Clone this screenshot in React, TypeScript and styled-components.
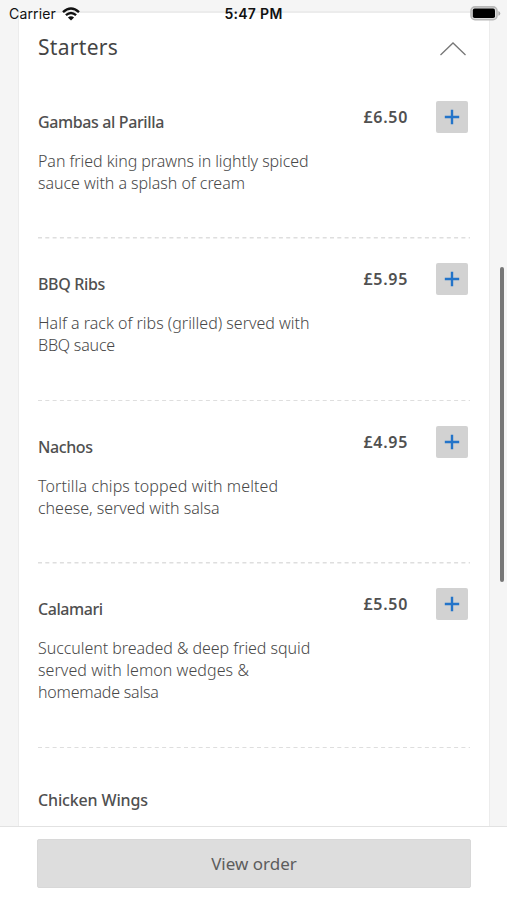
import React from "react";
import styled, { createGlobalStyle } from "styled-components";

const GlobalStyle = createGlobalStyle`
  *, *::before, *::after { box-sizing: border-box; }
  html, body { margin: 0; padding: 0; overflow: hidden; }
  body { font-family: "Noto Sans", "Open Sans", sans-serif; color: #505050; }
  h2, h3, p { margin: 0; }
`;

const Screen = styled.div`
  position: relative;
  display: flex;
  flex-direction: column;
  height: 900px;
  background: #f5f5f5;
  overflow: hidden;
`;

const StatusBar = styled.div`
  position: absolute;
  inset: 0 0 auto 0;
  display: grid;
  grid-template-columns: 1fr auto 1fr;
  align-items: center;
  height: 27px;
  padding: 0 8px 0 9px;
  font-family: Inter, "Liberation Sans", sans-serif;
  font-size: 14px;
  color: #111;
`;

const Carrier = styled.div`
  display: flex;
  align-items: center;
  gap: 6px;
  letter-spacing: 0.15px;
`;

const Clock = styled.div`
  font-weight: 600;
  letter-spacing: 0.3px;
  padding-right: 1px;
`;

const BatterySlot = styled.div`
  display: flex;
  justify-content: flex-end;
  margin-right: -2px;
`;

const Scroller = styled.main`
  flex: 1;
  min-height: 0;
  overflow: hidden;
  padding: 11px 17px 0 18px;
`;

const Card = styled.section`
  height: 900px;
  padding: 0 19px;
  background: #fff;
  border: 1px solid #ececec;
  border-top-width: 2px;
`;

const SectionHeader = styled.header`
  display: flex;
  align-items: center;
  justify-content: space-between;
  height: 63px;
  padding: 8px 4px 0 0;
`;

const SectionTitle = styled.h2`
  font-size: 21px;
  font-weight: 400;
  line-height: 30px;
  letter-spacing: 0.3px;
  color: #444;
  padding-bottom: 3px;
`;

const Item = styled.article`
  display: flex;
  justify-content: space-between;
  align-items: flex-start;
  padding: 24.5px 2.5px 43px 0;
`;

const PlainItem = styled(Item)`
  padding-top: 31px;
`;

const Divider = styled.svg`
  display: block;
  width: 432px;
  height: 1.5px;
`;

const ItemName = styled.h3<{ $tracking: number }>`
  height: 39.5px;
  padding-top: 8px;
  font-size: 16px;
  font-weight: 500;
  line-height: 26px;
  letter-spacing: ${(p) => p.$tracking}px;
  white-space: nowrap;
`;

const Description = styled.p`
  padding-top: 9.75px;
  padding-bottom: 0.25px;
  font-size: 16px;
  font-weight: 300;
  line-height: 22px;
  color: #484848;
`;

const Line = styled.span<{ $tracking: number }>`
  display: block;
  white-space: nowrap;
  letter-spacing: ${(p) => p.$tracking}px;
`;

const Purchase = styled.div`
  display: flex;
  align-items: center;
  gap: 27.5px;
`;

const Price = styled.span`
  font-size: 16px;
  font-weight: 600;
  line-height: 30px;
  letter-spacing: 0.7px;
`;

const AddButton = styled.button`
  display: grid;
  place-items: center;
  width: 32px;
  height: 32px;
  padding: 0;
  border: 0;
  border-radius: 2px;
  background: #d2d2d2;
`;

const Footer = styled.footer`
  height: 74px;
  padding: 12px 36px 0 37px;
  background: #fff;
  border-top: 1px solid #e2e2e2;
`;

const OrderButton = styled.button`
  display: block;
  width: 100%;
  height: 49px;
  padding: 0;
  border: 1px solid #d8d8d8;
  border-radius: 2px;
  background: #ddd;
  color: #5c5c5c;
  font-family: "Noto Sans", sans-serif;
  font-size: 17px;
  font-weight: 400;
`;

const ScrollThumb = styled.div`
  position: absolute;
  top: 267px;
  right: 3px;
  width: 4px;
  height: 315px;
  border-radius: 2px;
  background: #777;
`;

type Text = [string, number];
type MenuItem = { name: Text; price: string; lines: Text[] };

const menu: MenuItem[] = [
  { name: ["Gambas al Parilla", -0.38], price: "£6.50", lines: [["Pan fried king prawns in lightly spiced", -0.06], ["sauce with a splash of cream", -0.04]] },
  { name: ["BBQ Ribs", -0.35], price: "£5.95", lines: [["Half a rack of ribs (grilled) served with", 0], ["BBQ sauce", -0.2]] },
  { name: ["Nachos", -0.4], price: "£4.95", lines: [["Tortilla chips topped with melted", 0.11], ["cheese, served with salsa", -0.03]] },
  { name: ["Calamari", -0.45], price: "£5.50", lines: [["Succulent breaded & deep fried squid", -0.05], ["served with lemon wedges &", 0.07], ["homemade salsa", -0.2]] },
];

const WifiIcon = () => (
  <svg width="18" height="14" viewBox="0 0 18 14" fill="none" stroke="#111" strokeWidth="2.4">
    <path d="M1 5.2Q9-2.2 17 5.2M3.9 8.2Q9 3.6 14.1 8.2" />
    <path d="M9 13.6 5.9 10.5Q9 7.8 12.1 10.5Z" fill="#111" stroke="none" />
  </svg>
);

const BatteryIcon = () => (
  <svg width="31" height="15" viewBox="0 0 31 15">
    <rect x="1" y="0.9" width="26" height="12.8" rx="4" fill="#ddd" stroke="#b8b8b8" strokeWidth="1.6" />
    <rect x="2.8" y="2.6" width="22.2" height="9.4" rx="1.8" fill="#000" />
    <path d="M28.4 5v4.8Q30.3 9 30.3 7.4T28.4 5Z" fill="#aaa" />
  </svg>
);

const PlusIcon = () => (
  <svg width="16" height="16" viewBox="0 0 16 16" stroke="#2374c9" strokeWidth="2.4">
    <path d="M.8 8h14.4M8 .8v14.4" />
  </svg>
);

const ChevronUp = () => (
  <svg width="26" height="14" viewBox="0 0 26 14" fill="none" stroke="#777" strokeWidth="1.3">
    <path d="m.5 13 12.5-12 12.5 12" />
  </svg>
);

const DashedRule = () => (
  <Divider viewBox="0 0 432 1.5" fill="none">
    <path d="M0 .75h432" stroke="#dedede" strokeWidth="1.3" strokeDasharray="4 3.3" />
  </Divider>
);

export default function App() {
  return (
    <Screen>
      <GlobalStyle />
      <Scroller>
        <Card>
          <SectionHeader>
            <SectionTitle>Starters</SectionTitle>
            <ChevronUp />
          </SectionHeader>
          {menu.map((item) => (
            <React.Fragment key={item.name[0]}>
              <Item>
                <div>
                  <ItemName $tracking={item.name[1]}>{item.name[0]}</ItemName>
                  <Description>
                    {item.lines.map(([text, tracking]) => (
                      <Line key={text} $tracking={tracking}>{text}</Line>
                    ))}
                  </Description>
                </div>
                <Purchase>
                  <Price>{item.price}</Price>
                  <AddButton aria-label={`Add ${item.name[0]}`}><PlusIcon /></AddButton>
                </Purchase>
              </Item>
              <DashedRule />
            </React.Fragment>
          ))}
          <PlainItem>
            <ItemName $tracking={-0.15}>Chicken Wings</ItemName>
          </PlainItem>
        </Card>
      </Scroller>
      <Footer>
        <OrderButton>View order</OrderButton>
      </Footer>
      <StatusBar>
        <Carrier>Carrier <WifiIcon /></Carrier>
        <Clock>5:47 PM</Clock>
        <BatterySlot><BatteryIcon /></BatterySlot>
      </StatusBar>
      <ScrollThumb />
    </Screen>
  );
}
